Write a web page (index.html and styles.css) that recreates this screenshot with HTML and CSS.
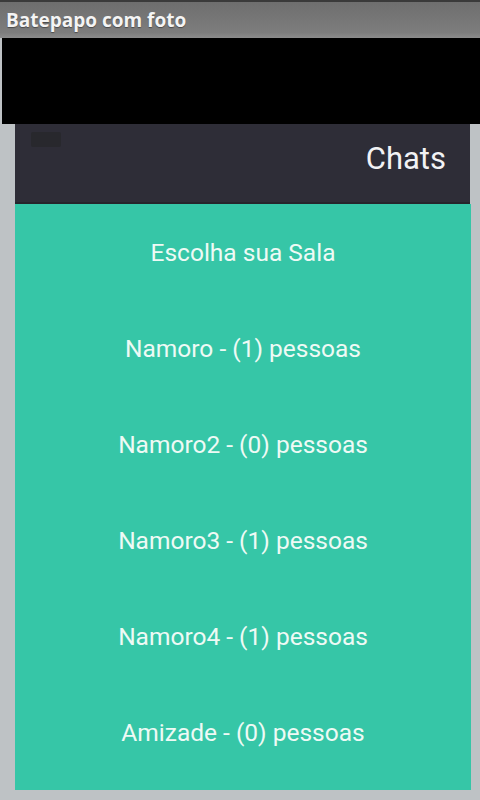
FILE: index.html
```html
<!DOCTYPE html>
<html lang="pt">
  <head>
    <meta charset="UTF-8" />
    <meta name="viewport" content="width=device-width, initial-scale=1.0" />
    <title>Batepapo com foto</title>
    <link rel="stylesheet" href="styles.css">
  </head>
  <body>
    <div class="titlebar">Batepapo com foto</div>
    <div class="blackbar"></div>

    <div class="header">
      <div class="menu-btn"></div>
      <div class="header-title">Chats</div>
    </div>

    <div class="rooms">
      <div class="room">Escolha sua Sala</div>
      <div class="room">Namoro - (1) pessoas</div>
      <div class="room">Namoro2 - (0) pessoas</div>
      <div class="room">Namoro3 - (1) pessoas</div>
      <div class="room">Namoro4 - (1) pessoas</div>
      <div class="room">Amizade - (0) pessoas</div>
    </div>
  </body>
</html>
```

FILE: styles.css
```css
* {
  margin: 0;
  padding: 0;
  box-sizing: border-box;
}

body {
  font-family: Roboto, "Liberation Sans", sans-serif;
  width: 480px;
  height: 800px;
  overflow: hidden;
  background-color: #bec2c5;
}

.titlebar {
  height: 38px;
  border-top: 2px solid #3a3a3a;
  background: linear-gradient(#6e6e6e, #7d7d7d 85%, #8c8c8c);
  color: #f4f4f4;
  font-family: "Open Sans", Roboto, sans-serif;
  font-size: 19px;
  font-weight: bold;
  line-height: 36px;
  padding-left: 6px;
  text-shadow: 0 1px 1px rgba(0, 0, 0, 0.4);
}

.blackbar {
  height: 86px;
  margin-left: 2px;
  background: #000;
}

.header {
  display: flex;
  justify-content: space-between;
  align-items: flex-start;
  height: 80px;
  margin: 0 10px 0 15px;
  padding: 8px 24px 0 16px;
  background-color: #2e2d37;
  border-bottom: 2px solid #26252c;
}

.menu-btn {
  width: 30px;
  height: 15px;
  background: #28282d;
  border-radius: 2px;
}

.header-title {
  align-self: center;
  margin-top: -18px;
  color: #f2f2f4;
  font-size: 31px;
}

.rooms {
  display: flex;
  flex-direction: column;
  margin: 0 9px 0 15px;
  padding-bottom: 10px;
  background-color: #36c6a7;
}

.room {
  display: flex;
  justify-content: center;
  align-items: center;
  height: 96px;
  color: #eefaf5;
  font-size: 24.5px;
}
```
